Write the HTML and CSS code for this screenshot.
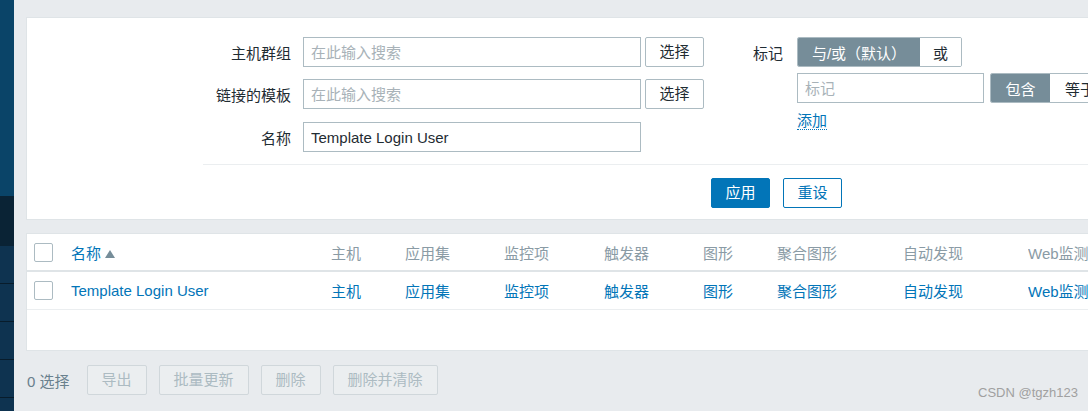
FILE: index.html
```html
<!DOCTYPE html>
<html lang="zh-CN">
<head>
<meta charset="utf-8">
<title>模板</title>
<link rel="stylesheet" href="styles.css">
</head>
<body>
<div class="app">
  <nav class="sidebar">
    <div class="sb-top"></div>
    <div class="sb-active"></div>
    <div class="sb-item"></div>
    <div class="sb-item"></div>
    <div class="sb-item"></div>
    <div class="sb-item"></div>
    <div class="sb-item"></div>
  </nav>
  <main class="main">
    <section class="card filter">
      <div class="filter-cols">
        <div class="col-left">
          <div class="form-row">
            <label class="form-label">主机群组</label>
            <input class="text-input" type="text" placeholder="在此输入搜索">
            <button class="btn btn-grey">选择</button>
          </div>
          <div class="form-row">
            <label class="form-label">链接的模板</label>
            <input class="text-input" type="text" placeholder="在此输入搜索">
            <button class="btn btn-grey">选择</button>
          </div>
          <div class="form-row">
            <label class="form-label">名称</label>
            <input class="text-input" type="text" value="Template Login User">
          </div>
        </div>
        <div class="col-right">
          <div class="tag-row">
            <span class="tag-label">标记</span>
            <div class="seg">
              <span class="seg-item seg-on seg-wide">与/或（默认）</span>
              <span class="seg-item">或</span>
            </div>
          </div>
          <div class="tag-row tag-row2">
            <input class="tag-input" type="text" placeholder="标记">
            <div class="seg">
              <span class="seg-item seg-on seg-60">包含</span>
              <span class="seg-item seg-60">等于</span>
            </div>
          </div>
          <div class="tag-add"><a class="link-dotted">添加</a></div>
        </div>
      </div>
      <div class="divider"></div>
      <div class="filter-actions">
        <button class="btn btn-primary">应用</button>
        <button class="btn btn-alt">重设</button>
      </div>
    </section>

    <section class="card list">
      <table class="tbl">
        <colgroup>
          <col class="c-cb"><col class="c-name"><col class="c-74"><col class="c-99"><col class="c-100"><col class="c-99"><col class="c-74"><col class="c-126"><col class="c-125"><col class="c-web">
        </colgroup>
        <thead>
          <tr>
            <th><span class="checkbox"></span></th>
            <th><a class="link">名称</a><span class="sort-arrow"></span></th>
            <th>主机</th>
            <th>应用集</th>
            <th>监控项</th>
            <th>触发器</th>
            <th>图形</th>
            <th>聚合图形</th>
            <th>自动发现</th>
            <th>Web监测</th>
          </tr>
        </thead>
        <tbody>
          <tr>
            <td><span class="checkbox"></span></td>
            <td><a class="link">Template Login User</a></td>
            <td><a class="link">主机</a></td>
            <td><a class="link">应用集</a></td>
            <td><a class="link">监控项</a></td>
            <td><a class="link">触发器</a></td>
            <td><a class="link">图形</a></td>
            <td><a class="link">聚合图形</a></td>
            <td><a class="link">自动发现</a></td>
            <td><a class="link">Web监测</a></td>
          </tr>
        </tbody>
      </table>
      <div class="list-foot"></div>
    </section>

    <div class="action-bar">
      <span class="selected-count">0 选择</span>
      <button class="btn btn-disabled">导出</button>
      <button class="btn btn-disabled">批量更新</button>
      <button class="btn btn-disabled">删除</button>
      <button class="btn btn-disabled">删除并清除</button>
    </div>
  </main>
</div>
<div class="watermark">CSDN @tgzh123</div>
</body>
</html>
```

FILE: styles.css
```css
html, body {
  margin: 0;
  padding: 0;
  overflow: hidden;
  height: 411px;
}
body {
  background: #e8ebee;
  font-family: "Liberation Sans", Arial, "Noto Sans CJK SC", sans-serif;
  font-size: 15px;
  color: #1f2c33;
  position: relative;
}
.app {
  display: flex;
  height: 411px;
}
.sidebar {
  width: 14px;
  flex: 0 0 14px;
  display: flex;
  flex-direction: column;
  background: #0e3350;
  overflow: hidden;
}
.sidebar > div { flex-shrink: 0; }
.sb-top { height: 196px; background: #0a4468; }
.sb-active { height: 50px; background: #0a2335; }
.sb-item {
  height: 37px;
  background: #0e3350;
  border-bottom: 1px solid #081c2b;
}
.main {
  flex: 0 0 1200px;
  padding: 17px 0 0 12px;
  box-sizing: border-box;
}
.card {
  background: #fff;
  border: 1px solid #dfe4e7;
}
.filter {
  padding: 19px 0 11px 0;
}
.filter-cols {
  display: flex;
}
.col-left {
  display: flex;
  flex-direction: column;
  gap: 12px;
  width: 677px;
}
.form-row {
  display: flex;
  align-items: center;
  height: 30px;
}
.form-row + .form-row + .form-row { margin-top: 1px; }
.form-label {
  width: 264px;
  text-align: right;
  margin-right: 12px;
}
.text-input {
  width: 338px;
  height: 30px;
  box-sizing: border-box;
  border: 1px solid #acbbc2;
  padding: 0 7px;
  font: inherit;
  color: #1f2c33;
  outline: none;
}
.text-input::placeholder, .tag-input::placeholder {
  color: #a8b2b8;
}
.btn {
  height: 30px;
  box-sizing: border-box;
  font: inherit;
  padding: 0 13px;
  border-radius: 2px;
  cursor: pointer;
  line-height: 28px;
}
.btn-grey {
  margin-left: 4px;
  width: 59px;
  background: #fff;
  border: 1px solid #acbbc2;
  color: #1f2c33;
}
.col-right {
  margin-left: 49px;
  display: flex;
  flex-direction: column;
}
.tag-row {
  display: flex;
  align-items: center;
  height: 30px;
}
.tag-label {
  width: 30px;
  margin-right: 14px;
}
.tag-row2 {
  margin-top: 6px;
  margin-left: 44px;
}
.seg {
  display: flex;
  height: 30px;
  box-sizing: border-box;
  border: 1px solid #acbbc2;
  border-radius: 2px;
  overflow: hidden;
}
.seg-item {
  display: flex;
  align-items: center;
  justify-content: center;
  padding: 0 13px;
  background: #fff;
  color: #1f2c33;
  white-space: nowrap;
}
.seg-on {
  background: #768d99;
  color: #fff;
}
.seg-wide { width: 122px; box-sizing: border-box; }
.seg-60 { width: 60px; box-sizing: border-box; }
.seg-on.seg-60 { width: 59px; }
.tag-input {
  width: 187px;
  height: 30px;
  box-sizing: border-box;
  border: 1px solid #acbbc2;
  padding: 0 7px;
  font: inherit;
  color: #1f2c33;
  margin-right: 6px;
  outline: none;
}
.tag-add {
  margin-left: 44px;
  margin-top: 9px;
  line-height: 18px;
}
.link-dotted {
  color: #0275b8;
  border-bottom: 1px dotted #0275b8;
  text-decoration: none;
}
.divider {
  margin: 12px 0 0 176px;
  height: 1px;
  background: #ebeef0;
}
.filter-actions {
  display: flex;
  gap: 13px;
  padding-left: 684px;
  margin-top: 13px;
}
.btn-primary {
  width: 59px;
  background: #0275b8;
  border: 1px solid #0275b8;
  color: #fff;
}
.btn-alt {
  width: 59px;
  background: #fff;
  border: 1px solid #0275b8;
  color: #0275b8;
}
.list {
  margin-top: 13px;
}
.tbl {
  border-collapse: collapse;
  table-layout: fixed;
  width: 1141px;
}
.c-cb { width: 44px; }
.c-name { width: 260px; }
.c-74 { width: 74px; }
.c-99 { width: 99px; }
.c-100 { width: 100px; }
.c-126 { width: 126px; }
.c-125 { width: 125px; }
.c-web { width: 140px; }
.tbl th {
  height: 36px;
  text-align: left;
  font-weight: normal;
  color: #8a9ba5;
  padding: 0;
  border-bottom: 2px solid #dfe4e7;
  white-space: nowrap;
  overflow: hidden;
}
.tbl td {
  height: 37px;
  padding: 0;
  border-bottom: 1px solid #ebeef0;
  white-space: nowrap;
  overflow: hidden;
}
.tbl th:first-child, .tbl td:first-child {
  padding-left: 7px;
}
.checkbox {
  display: block;
  width: 19px;
  height: 19px;
  box-sizing: border-box;
  border: 1px solid #acbbc2;
  border-radius: 2px;
  background: #fff;
}
.link {
  color: #0275b8;
  text-decoration: none;
}
.sort-arrow {
  display: inline-block;
  width: 0;
  height: 0;
  margin-left: 4px;
  border-left: 5px solid transparent;
  border-right: 5px solid transparent;
  border-bottom: 8px solid #768d99;
  vertical-align: 1px;
}
.list-foot {
  height: 40px;
}
.action-bar {
  display: flex;
  align-items: center;
  gap: 12px;
  margin-top: 14px;
}
.selected-count {
  color: #69808d;
  margin-left: 1px;
  margin-right: 5px;
}
.btn-disabled {
  padding: 0 14px;
  background: #ebeef0;
  border: 1px solid #d0d7db;
  color: #acbbc2;
}
.watermark {
  position: absolute;
  left: 978px;
  top: 385px;
  font-family: "Liberation Sans", Arial, sans-serif;
  font-size: 13px;
  color: #a0a0a0;
  white-space: nowrap;
}
```
